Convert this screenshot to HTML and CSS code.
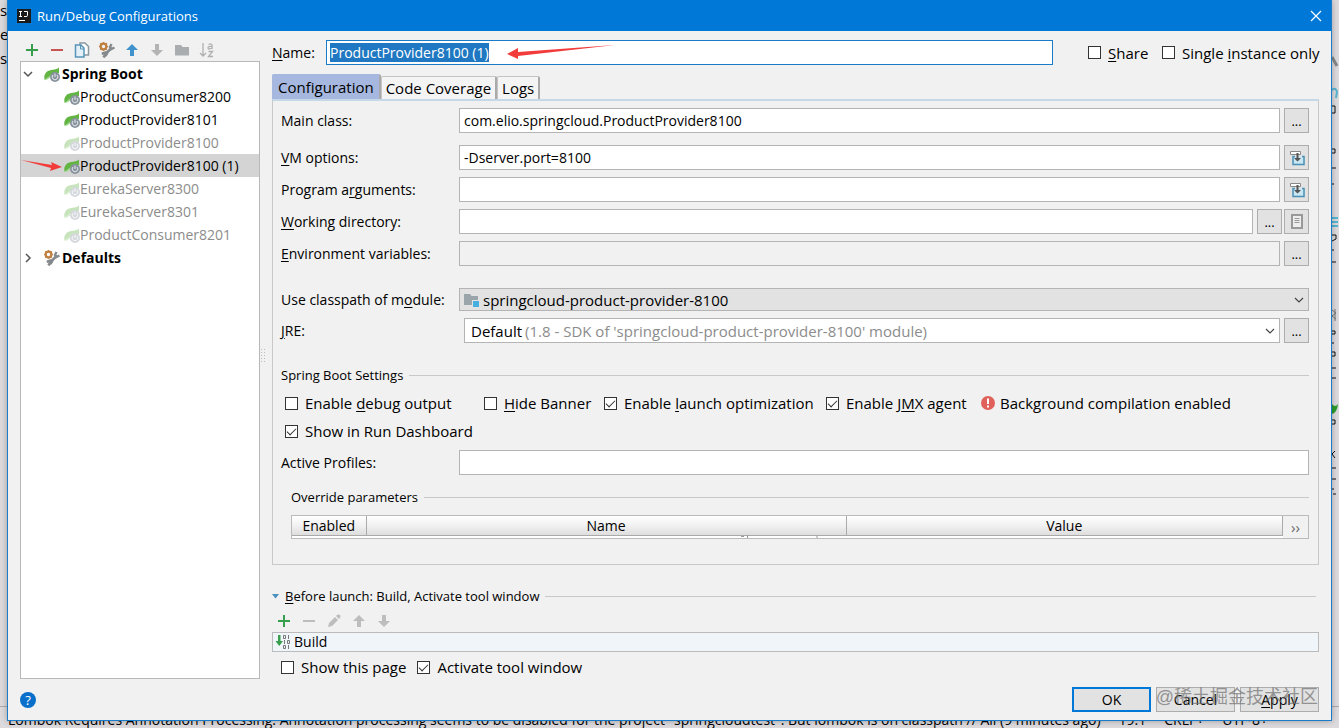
FILE: index.html
```
<!DOCTYPE html>
<html lang="en">

	<head>
		<title>Run/Debug Configurations</title>
		<meta charset="utf-8">
		<link rel="stylesheet" href="styles.css">
	</head>

	<body>
		<!-- shared icons -->
		<svg class="sprite" aria-hidden="true">
			<symbol id="boot" viewBox="0 0 16 16">
				<path fill="#62b543" d="M15 1.500C12 4.500 6 3 2.500 6 0 8.500 0 11 .5 13.500L3 13C7 10 10 7.500 15 7z"/>
				<path fill="#9fd68a" d="M0 14C3 11.500 6 9 11 7.500L7 11 3 13.500z"/>
				<circle cx="11" cy="11" r="5" fill="#87929c"/>
				<path fill="none" stroke="#e8ecef" d="M9 9a2.800 2.800 0 1 0 4 0M11 7.500v3.500"/>
			</symbol>
			<symbol id="wrench" viewBox="0 0 16 16">
				<path fill="none" stroke="#85898c" stroke-width="2.600" d="M4.500 15.500L7 11.500l5-5"/>
				<path fill="none" stroke="#85898c" stroke-width="2.400" d="M12.500 2l-1.500 3 1.500 2 3-1.500"/>
				<path fill="#85898c" d="M2.500 10.500L7 9l2.500 2.500-2 3H6l0-2-3 .5z"/>
				<circle cx="4.500" cy="4.500" r="2.800" fill="none" stroke="#c08142" stroke-width="2.200"/>
				<path stroke="#c08142" stroke-width="1.500" d="M4.500 0v2M4.500 7v2M0 4.500h2M7 4.500h2M1.300 1.300l1.500 1.500M6.300 6.300l1.500 1.500M1.300 7.700l1.500-1.500M6.300 2.800l1.500-1.500"/>
			</symbol>
			<symbol id="plus" viewBox="0 0 16 16"><path stroke="#369e4c" stroke-width="2" d="M2 8h12M8 2v12"/></symbol>
			<symbol id="minus" viewBox="0 0 16 16"><path stroke="currentColor" stroke-width="2" d="M2 8h12"/></symbol>
			<symbol id="up" viewBox="0 0 16 16"><path fill="currentColor" d="M8 2l6 6h-4v6H6V8H2z"/></symbol>
			<symbol id="down" viewBox="0 0 16 16"><path fill="currentColor" d="M8 14l6-6h-4V2H6v6H2z"/></symbol>
			<symbol id="insert" viewBox="0 0 16 16">
				<path fill="#c9e6f3" stroke="#4a90b5" stroke-width="1.500" d="M6 6.500H4V14.500h11V6.500h-2"/>
				<path fill="#fff" stroke="#888" d="M1.500 4.500V1.500h10v3z"/>
				<path fill="#555" d="M7.500 3h2v5h2.500l-3.500 3.500L5 8h2.500z"/>
			</symbol>
			<symbol id="arrow" viewBox="0 0 12 8"><path fill="none" stroke="#444" stroke-width="1.200" d="M2 2l4 4 4-4"/></symbol>
		</svg>

		<!-- the editor behind the dialog -->
		<div class="editor" aria-hidden="true">
			<div class="edge">
				<span>s</span><span>e</span><span>s</span>
			</div>
			<svg class="gutter" width="7" height="520" viewBox="0 0 7 520">
				<path stroke="#888" stroke-width="3" d="M0 57l5 9"/>
				<path stroke="#56b6d0" stroke-width="2" fill="none" d="M0 90q4-3 5 2l-1 6"/>
				<path stroke="#56b6d0" stroke-width="2" d="M0 218h6M0 222h6M0 226h6"/>
				<path stroke="#111" stroke-width="1" fill="none" d="M0 106h3v7H0M0 149h3v4H0M0 168h4M0 184h2M0 235h4v4l-4 2M0 250h2M0 262h4M0 331h3v3H0M0 343h2M0 352h3v4H0M0 368h4M0 378h4M0 420h3v4H0M3 451l-3 3 3 4M0 468h4M0 479h4M0 489h2M1 494h3"/>
				<path stroke="#777" fill="none" d="M0 310l4 3-4 3 4 3M3 309v12"/>
				<path fill="#2a9d2a" d="M0 404q3 4 6 0-1 9-6 10z"/>
			</svg>
			<div class="status">
				<span>Lombok Requires Annotation Processing: Annotation processing seems to be disabled for the project "springcloudtest". But lombok is on classpath // All (9 minutes ago)</span>
				<span>19:1</span><span>CRLF÷</span><span>UTF-8÷</span>
			</div>
		</div>

		<div class="dialog">
			<div class="titlebar">
				<svg width="14" height="14" viewBox="0 0 14 14">
					<path fill="#1b1b1b" d="M0 0h14v14H0z"/>
					<path fill="none" stroke="#fff" d="M2 2.500h3M3.500 2.500v5M2 7.500h3M7 2.500h3.500v4q0 1-1.500 1H7"/>
					<path stroke="#fff" d="M2 11.500h6"/>
				</svg>
				<span>Run/Debug Configurations</span>
				<button class="close" aria-label="Close">
					<svg width="12" height="12" viewBox="0 0 12 12"><path stroke="#fff" stroke-width="1.200" d="M1 1l10 10M11 1L1 11"/></svg>
				</button>
			</div>

			<div class="content">
				<div class="side">
					<div class="tools">
						<button aria-label="Add"><svg><use href="#plus"/></svg></button>
						<button aria-label="Remove" class="red"><svg><use href="#minus"/></svg></button>
						<button aria-label="Copy"><svg viewBox="0 0 16 16">
							<path fill="#fff" stroke="#8b979e" stroke-width="1.500" d="M6 1h5l3.500 3.500V13H6z"/>
							<path fill="#e3f0f7" stroke="#5795b8" stroke-width="1.500" d="M1.500 3H7l3 3v9H1.500z"/>
							<path fill="none" stroke="#5795b8" d="M6.500 3v4H10"/>
						</svg></button>
						<button aria-label="Edit defaults"><svg><use href="#wrench"/></svg></button>
						<button aria-label="Move up" class="blue"><svg><use href="#up"/></svg></button>
						<button aria-label="Move down"><svg><use href="#down"/></svg></button>
						<button aria-label="New folder"><svg viewBox="0 0 16 16"><path fill="#a9adb0" d="M1 3h6l1.500 2H15v8.500H1z"/></svg></button>
						<button aria-label="Sort"><svg viewBox="0 0 16 16">
							<path fill="none" stroke="#b0b0b0" stroke-width="1.300" d="M4 1v13M1 11l3 3 3-3M9.500 2.500q3.500-1.500 3.500 1V7M13 4.500Q9 4 9 6t4 0M9.500 9.500h4l-4 5H14"/>
						</svg></button>
					</div>
					<ul class="tree">
						<li class="root">
							<svg class="chevron" viewBox="0 0 12 12"><path fill="none" stroke="#555" stroke-width="1.500" d="M2 4l4 4 4-4"/></svg>
							<svg><use href="#boot"/></svg>Spring Boot
						</li>
						<li><svg><use href="#boot"/></svg>ProductConsumer8200</li>
						<li><svg><use href="#boot"/></svg>ProductProvider8101</li>
						<li class="off"><svg><use href="#boot"/></svg>ProductProvider8100</li>
						<li class="current"><svg><use href="#boot"/></svg>ProductProvider8100 (1)
							<svg class="mark" viewBox="0 0 44 14"><path fill="#f23c3c" d="M0 0l31 5-1-3 11 5-12 4 1-3z"/></svg>
						</li>
						<li class="off"><svg><use href="#boot"/></svg>EurekaServer8300</li>
						<li class="off"><svg><use href="#boot"/></svg>EurekaServer8301</li>
						<li class="off"><svg><use href="#boot"/></svg>ProductConsumer8201</li>
						<li class="root">
							<svg class="chevron" viewBox="0 0 12 12"><path fill="none" stroke="#555" stroke-width="1.500" d="M4 2l4 4-4 4"/></svg>
							<svg><use href="#wrench"/></svg>Defaults
						</li>
					</ul>
				</div>

				<div class="splitter"></div>

				<div class="main">
					<div class="name-row">
						<label for="name"><u>N</u>ame:</label>
						<div class="name-box">
							<input type="text" id="name" value="ProductProvider8100 (1)">
							<svg class="mark" viewBox="0 0 110 16"><path fill="#f23c3c" d="M0 10l11-6v4L108 1 11 12v3z"/></svg>
						</div>
						<label class="check"><input type="checkbox"><span><u>S</u>hare</span></label>
						<label class="check"><input type="checkbox"><span>Single <u>i</u>nstance only</span></label>
					</div>

					<div class="tabs">
						<button class="active">Configuration</button>
						<button>Code Coverage</button>
						<button>Logs</button>
					</div>

					<div class="panel">
						<div class="row first">
							<label for="main-class">Main class:</label>
							<input type="text" id="main-class" value="com.elio.springcloud.ProductProvider8100">
							<button class="sq">...</button>
						</div>
						<div class="row">
							<label for="vm"><u>V</u>M options:</label>
							<input type="text" id="vm" value="-Dserver.port=8100">
							<button class="sq" aria-label="Expand"><svg><use href="#insert"/></svg></button>
						</div>
						<div class="row">
							<label for="args">Program a<u>r</u>guments:</label>
							<input type="text" id="args">
							<button class="sq" aria-label="Expand"><svg><use href="#insert"/></svg></button>
						</div>
						<div class="row">
							<label for="dir"><u>W</u>orking directory:</label>
							<input type="text" id="dir">
							<button class="sq">...</button>
							<button class="sq" aria-label="Macros"><svg viewBox="0 0 16 16"><path fill="#eee" stroke="#999" stroke-width="2" d="M3 1h10v13H3z"/><path stroke="#999" d="M5.500 4.500h5M5.500 6.500h5M5.500 8.500h5"/></svg></button>
						</div>
						<div class="row">
							<label for="env"><u>E</u>nvironment variables:</label>
							<input type="text" id="env" readonly>
							<button class="sq">...</button>
						</div>

						<div class="row module">
							<label for="module">Use classpath of m<u>o</u>dule:</label>
							<div class="combo gray">
								<svg viewBox="0 0 16 16"><path fill="#9aa5ab" d="M0 2h6l1.500 2H14v9H0z"/><path fill="#e2e2e2" d="M8 8h8v8H8z"/><path fill="#45b0e0" d="M9 9h6v6H9z"/></svg>
								<select id="module"><option>springcloud-product-provider-8100</option></select>
								<svg class="caret"><use href="#arrow"/></svg>
							</div>
						</div>
						<div class="row">
							<label for="jre"><u>J</u>RE:</label>
							<div class="combo jre">
								<span>Default</span>
								<select id="jre"><option>(1.8 - SDK of 'springcloud-product-provider-8100' module)</option></select>
								<svg class="caret"><use href="#arrow"/></svg>
							</div>
							<button class="sq">...</button>
						</div>

						<div class="section boot">Spring Boot Settings</div>
						<div class="checks">
							<label class="check"><input type="checkbox"><span>Enable <u>d</u>ebug output</span></label>
							<label class="check"><input type="checkbox"><span><u>H</u>ide Banner</span></label>
							<label class="check"><input type="checkbox" checked><span>Enable <u>l</u>aunch optimization</span></label>
							<label class="check"><input type="checkbox" checked><span>Enable J<u>M</u>X agent</span></label>
							<div class="error">
								<svg viewBox="0 0 16 16"><circle cx="8" cy="8" r="7" fill="#e0615a"/><path stroke="#fff" stroke-width="2" d="M8 3.500v5.500M8 10.500v2"/></svg>
								<span>Background compilation enabled</span>
							</div>
							<label class="check"><input type="checkbox" checked><span>Show in Run Dashboard</span></label>
						</div>
						<div class="row">
							<label for="profiles">Active Profiles:</label>
							<input type="text" id="profiles">
						</div>

						<div class="override">
							<div class="section">Override parameters</div>
							<div class="params">
								<table>
									<tr>
										<th class="c1">Enabled</th>
										<th class="c2">Name</th>
										<th>Value</th>
									</tr>
								</table>
								<button class="more">››</button>
								<svg class="cut" width="80" height="3" viewBox="0 0 80 3"><path stroke="#999" d="M1 1.500h3M7.500 0v3M76 2h2"/></svg>
							</div>
						</div>
					</div>

					<div class="section launch">
						<svg width="7" height="5" viewBox="0 0 7 5"><path fill="#4b8fbf" d="M0 0h7L3.500 4.500z"/></svg>
						<span><u>B</u>efore launch: Build, Activate tool window</span>
					</div>
					<div class="tools small">
						<button aria-label="Add"><svg><use href="#plus"/></svg></button>
						<button aria-label="Remove"><svg><use href="#minus"/></svg></button>
						<button aria-label="Edit"><svg viewBox="0 0 16 16"><path fill="currentColor" d="M2 14l1-4 6-6 3 3-6 6zM10 3l1-1q2-1 3 0t0 3l-1 1z"/></svg></button>
						<button aria-label="Move up"><svg><use href="#up"/></svg></button>
						<button aria-label="Move down"><svg><use href="#down"/></svg></button>
					</div>
					<div class="tasks">
						<svg viewBox="0 0 16 16">
							<path fill="#369e4c" d="M3 1h2.500v6H8L4.250 12 .5 7H3z"/>
							<path fill="none" stroke="#777" d="M8.500 1.500h2v3h-2zM13.500 1v4M9.500 6v4M12.500 6.500h2v3h-2zM8.500 11.500h2v3h-2zM13.500 11v4"/>
						</svg>
						<span>Build</span>
					</div>
					<div class="after">
						<label class="check"><input type="checkbox"><span>Show this page</span></label>
						<label class="check"><input type="checkbox" checked><span>Activate tool window</span></label>
					</div>
				</div>
			</div>

			<div class="footer">
				<button class="help">?</button>
				<button class="btn ok">OK</button>
				<button class="btn">Cancel</button>
				<button class="btn"><u>A</u>pply</button>
				<span class="watermark">@稀土掘金技术社区</span>
			</div>
		</div>
		<script src="script.js"></script>
	</body>

</html>
```
FILE: styles.css
```
* {
	box-sizing: border-box;
}

body {
	margin: 0;
	min-height: 100vh;
	padding: 0 7px 7px;
	display: flex;
	position: relative;
	overflow: hidden;
	background: #dcdadd;
	color: #000;
	font: 15px/20px "Open Sans", "Noto Sans", "Noto Sans CJK SC", sans-serif;
}

button,
input,
select {
	font: inherit;
	color: inherit;
	margin: 0;
	padding: 0;
	border-radius: 0;
}

u {
	text-underline-offset: 2px;
}

svg {
	width: 16px;
	height: 16px;
	flex: none;
	display: block;
}

.sprite {
	position: absolute;
	width: 0;
	height: 0;
}

/* editor behind the dialog */
.editor {
	position: absolute;
	inset: 0;
	display: flex;
	flex-direction: column;
	justify-content: space-between;
}

.edge {
	display: flex;
	flex-direction: column;
	gap: 4px;
	width: 7px;
	overflow: hidden;
}

.gutter {
	position: absolute;
	right: 0;
	top: 0;
	width: 7px;
	height: 520px;
}

.status {
	height: 22px;
	border-top: 1px solid #aaa;
	padding-left: 8px;
	display: flex;
	gap: 18px;
	font-size: 14px;
	line-height: 26px;
	white-space: nowrap;
}

/* dialog */
.dialog {
	position: relative;
	flex: 1;
	display: flex;
	flex-direction: column;
	background: #f1f1f1;
	border: 1px solid #1a7cc8;
	border-top: 0;
	box-shadow: 0 0 6px rgba(0, 0, 0, .3);
}

.titlebar {
	display: flex;
	align-items: center;
	gap: 6px;
	height: 31px;
	padding: 0 9px;
	background: #0078d7;
	color: #fff;
	font-size: 13px;
}

.titlebar svg {
	width: 14px;
	height: 14px;
}

.close {
	margin-left: auto;
	border: 0;
	background: none;
}

.close svg {
	width: 12px;
	height: 12px;
}

.content {
	flex: 1;
	display: flex;
	padding: 0 12px;
}

.side {
	width: 240px;
	padding-top: 9px;
	display: flex;
	flex-direction: column;
}

.tools {
	display: flex;
	gap: 9px;
	padding: 2px 4px 3px;
	color: #b4b4b4;
}

.tools button {
	border: 0;
	background: none;
	color: inherit;
}

.tools .red {
	color: #c75450;
}

.tools .blue {
	color: #3f92cb;
}

.tree {
	flex: 1;
	list-style: none;
	margin: 0;
	padding: 0;
	background: #fff;
	border: 1px solid #b8b8b8;
	font-size: 14px;
}

.tree li {
	position: relative;
	display: flex;
	align-items: center;
	height: 23px;
	padding-left: 43px;
}

.tree .root {
	padding-left: 1px;
	font-weight: bold;
}

.tree .root svg + svg {
	margin: 0 2px 0 10px;
}

.tree .chevron {
	width: 12px;
	height: 12px;
}

.tree .off {
	color: #8c8c8c;
}

.tree .off svg {
	opacity: .35;
}

.tree .current {
	background: #d4d4d4;
}

.tree .mark {
	position: absolute;
	left: 0;
	top: 6px;
	width: 44px;
	height: 14px;
}

.splitter {
	width: 5px;
	height: 14px;
	margin-right: 7px;
	align-self: center;
	background: radial-gradient(#bbb 1px, transparent 1px) 0 0 / 3px 3px;
}

.main {
	flex: 1;
	min-width: 0;
	padding-top: 9px;
}

.name-row {
	display: grid;
	grid-template-columns: 54px 1fr 109px 157px;
	align-items: center;
}

.name-row > label:first-child {
	font-size: 14px;
}

.name-row .name-box + .check {
	margin-left: 35px;
}

.name-box {
	position: relative;
}

.name-box .mark {
	position: absolute;
	left: 181px;
	top: 4px;
	width: 110px;
	height: 16px;
}

input[type="text"] {
	width: 100%;
	height: 25px;
	padding: 0 4px;
	background: #fff;
	border: 1px solid #b4b4b4;
	font-size: 14px;
	outline: 0;
}

input[type="text"]:read-only {
	background: #f1f1f1;
}

#name {
	padding: 0 3px;
	border-color: #1a7cc8;
}

#name::selection {
	background: #1f78c1;
	color: #fff;
}

.check {
	display: flex;
	align-items: center;
	gap: 7px;
	line-height: 18px;
	white-space: nowrap;
}

.check input {
	appearance: none;
	flex: none;
	width: 13px;
	height: 13px;
	background: #fff;
	border: 1px solid #333;
}

.check input:checked::before {
	content: "";
	display: block;
	width: 8px;
	height: 4px;
	margin: 2px 0 0 1px;
	border: solid #333;
	border-width: 0 0 1px 1px;
	transform: rotate(-45deg);
}

/* tabs */
.tabs {
	display: flex;
	align-items: flex-end;
	padding-top: 9px;
}

.tabs button {
	height: 23px;
	padding: 0 4px;
	background: #f4f4f4;
	border: 1px solid #c4c4c4;
	border-right: 2px solid #aaa;
	border-bottom: 0;
	border-radius: 2px 2px 0 0;
	line-height: 20px;
}

.tabs .active {
	height: 25px;
	padding: 0 5px;
	background: #a6b8df;
	border-color: #a6b8df;
	border-right-color: #aaa;
}

.panel {
	padding: 7px 9px 25px 8px;
	border: 1px solid #c8c8c8;
	border-top: 2px solid #c5d8e8;
}

.row {
	display: flex;
	align-items: center;
	gap: 4px;
	margin-bottom: 7px;
}

.row > label {
	flex: none;
	width: 174px;
	font-size: 14px;
	white-space: nowrap;
}

.row input {
	flex: 1;
	min-width: 0;
}

.first {
	margin-bottom: 12px;
}

.module {
	margin-top: 22px;
}

.sq {
	flex: none;
	width: 25px;
	height: 25px;
	display: flex;
	align-items: center;
	justify-content: center;
	background: #e2e2e2;
	border: 1px solid #adadad;
	font-size: 13px;
}

.sq + .sq {
	margin-left: -2px;
}

.combo {
	flex: 1;
	min-width: 0;
	display: flex;
	align-items: center;
	height: 25px;
	padding: 0 3px;
	background: #fff;
	border: 1px solid #b4b4b4;
}

.combo select {
	flex: 1;
	min-width: 0;
	appearance: none;
	border: 0;
	background: none;
	outline: 0;
}

.combo .caret {
	width: 12px;
	height: 8px;
}

.gray {
	height: 23px;
	padding-left: 4px;
	gap: 3px;
	background: #e2e2e2;
}

.jre {
	margin-left: 5px;
	padding-left: 6px;
	gap: 3px;
}

.jre select {
	color: #8c8c8c;
}

.section {
	display: flex;
	align-items: center;
	gap: 6px;
	font-size: 13px;
}

.section::after {
	content: "";
	flex: 1;
	height: 1px;
	background: #c8c8c8;
}

.boot {
	margin-top: 22px;
}

.checks {
	display: grid;
	grid-template-columns: 199px 120px 222px 155px 1fr;
	grid-auto-rows: 28px;
	align-items: center;
	margin: 4px 0 5px;
	padding-left: 4px;
}

.error {
	display: flex;
	align-items: center;
	gap: 4px;
	margin-left: -1px;
	white-space: nowrap;
}

.override {
	margin-top: 12px;
	padding-left: 10px;
}

.params {
	position: relative;
	display: flex;
	height: 24px;
	margin-top: 8px;
	background: #fff;
	border: 1px solid #bbb;
}

.params table {
	flex: 1;
	height: 20px;
	table-layout: fixed;
	border-collapse: collapse;
	background: linear-gradient(#fff, #f0f0f0 50%, #dcdcdc);
	border-bottom: 1px solid #aaa;
}

.params th {
	padding: 0;
	font-weight: normal;
	font-size: 14px;
	line-height: 18px;
	border-right: 1px solid #aaa;
}

.params .c1 {
	width: 74px;
}

.params .c2 {
	width: 480px;
}

.more {
	width: 25px;
	background: #f1f1f1;
	border: 0;
	color: #666;
}

.cut {
	position: absolute;
	left: 448px;
	bottom: 0;
	width: 80px;
	height: 3px;
}

/* before launch */
.launch {
	margin-top: 21px;
	padding-right: 3px;
}

.launch svg {
	width: 7px;
	height: 5px;
}

.small {
	padding: 7px 4px 3px;
	color: #bdbdbd;
}

.tasks {
	display: flex;
	align-items: center;
	gap: 3px;
	height: 20px;
	padding-left: 2px;
	background: #f0f5fa;
	border: 1px solid #bbb;
	font-size: 14px;
}

.after {
	display: flex;
	gap: 11px;
	padding: 6px 9px 2px;
}

.footer {
	position: relative;
	display: flex;
	align-items: center;
	gap: 5px;
	padding: 8px 12px;
}

.help {
	width: 16px;
	height: 16px;
	margin-right: auto;
	border: 0;
	border-radius: 50%;
	background: #0a6fcb;
	color: #fff;
	font-size: 13px;
	line-height: 16px;
}

.btn {
	width: 79px;
	height: 25px;
	background: #e2e2e2;
	border: 1px solid #adadad;
	font-size: 14px;
}

.ok {
	border: 2px solid #0078d7;
}

.watermark {
	position: absolute;
	right: 13px;
	bottom: 11px;
	color: rgba(110, 110, 110, .7);
	font: 18px/24px "Liberation Sans", "Noto Sans CJK SC", sans-serif;
	pointer-events: none;
}
```
FILE: script.js
```
// the name is selected when the dialog opens
var nameInput = document.getElementById('name');
nameInput.focus();
nameInput.select();
```
